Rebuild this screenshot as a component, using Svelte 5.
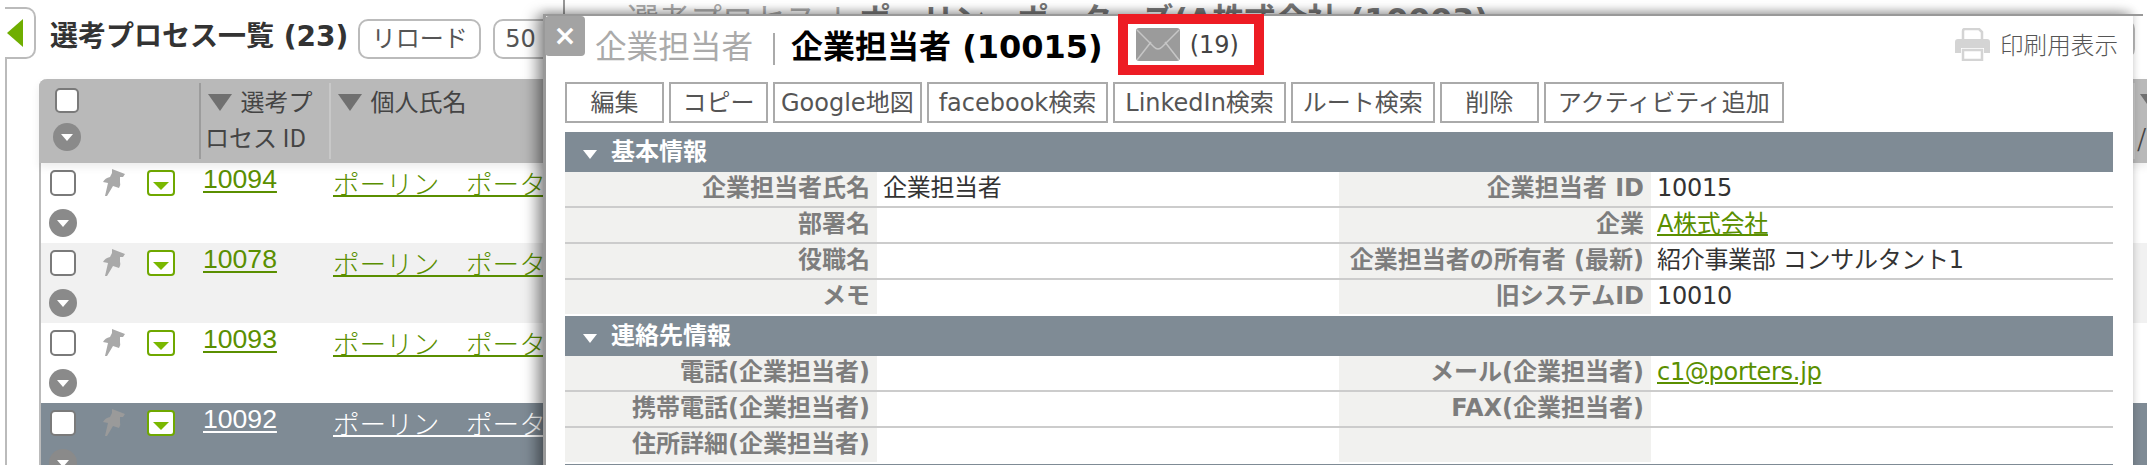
<script>
  const rows = [
    { id: "10094", cls: "" },
    { id: "10078", cls: "alt" },
    { id: "10093", cls: "" },
    { id: "10092", cls: "sel" },
  ];
  const actions = ["編集", "コピー", "Google地図", "facebook検索", "LinkedIn検索", "ルート検索", "削除", "アクティビティ追加"];
  const basic = [
    ["企業担当者氏名", "企業担当者", "企業担当者 ID", "10015"],
    ["部署名", "", "企業", "A株式会社", "#"],
    ["役職名", "", "企業担当者の所有者 (最新)", "紹介事業部 コンサルタント1"],
    ["メモ", "", "旧システムID", "10010"],
  ];
  const contact = [
    ["電話(企業担当者)", "", "メール(企業担当者)", "c1@porters.jp", "#"],
    ["携帯電話(企業担当者)", "", "FAX(企業担当者)", ""],
    ["住所詳細(企業担当者)", "", "", ""],
  ];
</script>

{#snippet pin()}
  <svg class="pin" viewBox="0 0 23 29" aria-hidden="true">
    <path d="M10 1 L23 6 L21 9 L18 9 L18 14 Q19 17 17 20 L11 18 L5 28 L3 28 L6 15 L1 14 Q3 10 8 9 L10 5 Z" />
  </svg>
{/snippet}

{#snippet round()}
  <span class="round"><i></i></span>
{/snippet}

{#snippet table(list)}
  {#each list as r}
    <div class="frow">
      <div class="lab">{r[0]}</div>
      <div class="val">{r[1]}</div>
      <div class="lab">{r[2]}</div>
      <div class="val">
        {#if r[4]}<a href={r[4]}>{r[3]}</a>{:else}{r[3]}{/if}
      </div>
    </div>
  {/each}
{/snippet}

<div class="page">
  <div class="bar">
    <div class="tab"><i></i></div>
    <h1>選考プロセス一覧 (23)</h1>
    <button class="pill reload">リロード</button>
    <button class="pill fifty">50</button>
    <button class="pill far" aria-label="menu"></button>
  </div>

  <div class="content">
    <div class="list">
      <div class="thead">
        <div class="hc first">
          <span class="check"></span>
          {@render round()}
        </div>
        <div class="hc"><i class="sort"></i> 選考プロセス ID</div>
        <div class="hc"><i class="sort"></i> 個人氏名</div>
        <div class="hc clip"><i class="sort"></i> 企業<br />/</div>
      </div>
      {#each rows as r}
        <div class="trow {r.cls}">
          <div class="tools">
            <span class="check"></span>
            {@render pin()}
            <span class="greenbox"><i></i></span>
            {@render round()}
          </div>
          <div class="idc"><a href="#">{r.id}</a></div>
          <div class="namec"><a href="#">ポーリン　ポーターズ</a></div>
        </div>
      {/each}
    </div>
  </div>

  <div class="back">
    <span class="t-gray">選考プロセス</span><span class="t-gray sep">|</span><b>ポーリン　ポーターズ(A株式会社 (10003)</b>
  </div>

  <div class="modal">
    <div class="topline"></div>
    <button class="close" aria-label="閉じる">×</button>
    <div class="mhead">
      <span class="mt-gray">企業担当者</span>
      <span class="mt-sep"></span>
      <strong>企業担当者 (10015)</strong>
      <div class="redbox">
        <svg class="mail" viewBox="0 0 44 33" aria-hidden="true">
          <rect width="44" height="33" rx="3" fill="#9b9b9b" />
          <path d="M1 2 L18 19 Q22 23 26 19 L43 2 M1 32 L15 14 M43 32 L29 14" fill="none" stroke="#c6c6c6" stroke-width="1.5" />
        </svg>
        <span class="count">(19)</span>
      </div>
      <div class="print">
        <svg class="printer" viewBox="0 0 35 33" aria-hidden="true">
          <path d="M8 14 V3 Q8 1 10 1 H24 L27 4 V14 Z" fill="none" stroke="#d4d4d4" stroke-width="2.5" />
          <path d="M3 11 H32 Q35 11 35 14 V25 H29 V20 H6 V25 H0 V14 Q0 11 3 11 Z" fill="#d4d4d4" />
          <path d="M8 22 H27 V32 H8 Z" fill="none" stroke="#d4d4d4" stroke-width="2.5" />
        </svg>
        <span>印刷用表示</span>
      </div>
    </div>

    <div class="actions">
      {#each actions as a}
        <button class="act">{a}</button>
      {/each}
    </div>

    <section>
      <div class="sec"><i></i><span>基本情報</span></div>
      {@render table(basic)}
      <div class="sec"><i></i><span>連絡先情報</span></div>
      {@render table(contact)}
      <div class="sec"></div>
    </section>
  </div>
</div>

<style>
  :global(body) {
    overflow: hidden;
    background: #fff;
  }
  .page {
    position: relative;
    height: 465px;
    overflow: hidden;
    padding-top: 7px;
    box-sizing: border-box;
    font-family: "DejaVu Sans", "Noto Sans CJK JP", sans-serif;
    color: #333;
  }
  .bar {
    display: flex;
    align-items: flex-start;
    height: 52px;
    padding-left: 5px;
    padding-right: 12px;
  }
  .tab {
    width: 29px;
    height: 48px;
    border: 2px solid #bbb;
    border-left: none;
    border-radius: 0 10px 10px 0;
    display: flex;
    align-items: center;
  }
  .tab i {
    margin-left: 2px;
    border-style: solid;
    border-width: 14px 16px 14px 0;
    border-color: transparent #6fae00 transparent transparent;
  }
  h1 {
    margin: 10px 0 0 14px;
    font-size: 28px;
    line-height: 40px;
    font-weight: 700;
    color: #333;
    white-space: nowrap;
  }
  .pill {
    margin-top: 12px;
    height: 40px;
    border: 2px solid #bbb;
    border-radius: 10px;
    background: #fff;
    font: inherit;
    font-size: 24px;
    line-height: 1;
    color: #555;
    padding: 0;
  }
  .reload {
    width: 123px;
    margin-left: 10px;
  }
  .fifty {
    width: 90px;
    margin-left: 12px;
    text-align: left;
    padding-left: 10px;
  }
  .far {
    width: 90px;
    margin-left: auto;
  }
  .content {
    margin-left: 5px;
    height: 406px;
    border-left: 2px solid #bbb;
    padding: 20px 0 0 32px;
    box-sizing: border-box;
  }
  .list {
    border-left: 2px solid #bbb;
    border-top-left-radius: 8px;
  }
  .thead {
    display: grid;
    grid-template-columns: 158px 130px 1804px 1fr;
    height: 84px;
    background: #b9b9b9;
    border-top-left-radius: 8px;
    box-shadow: 0 4px 8px rgba(0, 0, 0, 0.08);
    position: relative;
    font-size: 24px;
    line-height: 36px;
    font-family: "Noto Sans CJK JP", sans-serif;
    margin-left: -2px;
    padding-left: 2px;
  }
  .hc {
    margin: 4px 0;
    padding: 0 4px;
    border-left: 2px solid #9c9c9c;
    color: #444;
    box-sizing: border-box;
    overflow: hidden;
  }
  .hc + .hc + .hc {
    border-left-color: #c8c8c8;
  }
  .hc.first {
    border: none;
    padding: 5px 0 0 14px;
    display: flex;
    flex-direction: column;
    align-items: flex-start;
    gap: 10px;
  }
  .hc.clip {
    white-space: nowrap;
    padding-left: 2px;
  }
  .hc.first .round {
    margin-left: -2px;
  }
  .sort {
    display: inline-block;
    margin-left: 3px;
    margin-right: 3px;
    border-style: solid;
    border-width: 17px 12px 0;
    border-color: #707070 transparent transparent;
  }
  .check {
    display: block;
    width: 24px;
    height: 25px;
    border: 2px solid #7a7a7a;
    border-radius: 5px;
    background: #fff;
    box-sizing: border-box;
  }
  .round {
    display: flex;
    align-items: center;
    justify-content: center;
    width: 28px;
    height: 28px;
    border-radius: 50%;
    background: #8a8a8a;
  }
  .round i {
    border-style: solid;
    border-width: 7px 6px 0;
    border-color: #fff transparent transparent;
  }
  .trow {
    display: grid;
    grid-template-columns: 160px 130px 1fr;
    height: 80px;
    background: #fff;
  }
  .trow.alt {
    background: #f1f1f1;
  }
  .trow.sel {
    background: #7f8b95;
  }
  .tools {
    display: grid;
    grid-template-columns: 52px 45px 28px;
    grid-template-rows: 26px 28px;
    row-gap: 13px;
    padding: 7px 0 0 9px;
    align-content: start;
  }
  .tools .check {
    width: 26px;
    height: 26px;
  }
  .tools .round {
    grid-column: 1;
    grid-row: 2;
    margin-left: -1px;
  }
  .pin {
    width: 23px;
    height: 29px;
    fill: #a9a9a9;
    filter: blur(0.6px);
    margin-top: -2px;
  }
  .sel .pin {
    fill: #9a9a9a;
  }
  .greenbox {
    display: flex;
    align-items: center;
    justify-content: center;
    width: 28px;
    height: 26px;
    border: 2px solid #6fa800;
    border-radius: 4px;
    background: #fff;
    box-sizing: border-box;
  }
  .greenbox i {
    margin-top: 5px;
    border-style: solid;
    border-width: 8px 8px 0;
    border-color: #7ab800 transparent transparent;
  }
  a {
    color: #5a8f00;
    text-decoration: underline;
    text-decoration-thickness: 2px;
  }
  .idc,
  .namec {
    font-size: 26.6px;
    line-height: 30px;
    white-space: nowrap;
    overflow: hidden;
  }
  .idc {
    padding: 1px 0 0 2px;
    font-family: "Liberation Sans", sans-serif;
  }
  .idc a {
    text-underline-offset: 3px;
  }
  .namec {
    padding: 5px 0 8px 2px;
    font-family: "Noto Sans CJK JP", sans-serif;
    font-weight: 300;
  }
  .namec a {
    text-underline-offset: 1px;
  }
  .sel a {
    color: #fff;
  }
  .back {
    position: absolute;
    left: 563px;
    top: 0;
    width: 1580px;
    height: 14px;
    padding-left: 62px;
    box-sizing: border-box;
    border-left: 2px solid #999;
    background: #fff;
    overflow: hidden;
    font-size: 31.6px;
    line-height: 40px;
    white-space: nowrap;
    color: #777;
  }
  .t-gray {
    color: #aaa;
  }
  .sep {
    margin: 0 16px;
  }
  .modal {
    position: absolute;
    left: 543px;
    top: 14px;
    width: 1590px;
    height: 480px;
    box-sizing: border-box;
    border-top: 2px solid #999;
    border-left: 3px solid #999;
    background: #fff;
    box-shadow: -8px 0 12px rgba(0, 0, 0, 0.35), 0 -3px 8px rgba(0, 0, 0, 0.18);
  }
  .topline {
    position: absolute;
    top: -2px;
    left: 100%;
    width: 10px;
    height: 2px;
    background: #999;
  }
  .close {
    position: absolute;
    left: -1px;
    top: 0;
    width: 40px;
    height: 40px;
    padding: 0;
    border: none;
    border-radius: 4px;
    background: #a3a3a3;
    color: #fff;
    font: inherit;
    font-size: 28px;
    font-weight: 700;
    line-height: 38px;
  }
  .mhead {
    display: flex;
    align-items: flex-start;
    height: 66px;
    padding: 0 15px 0 49px;
  }
  .mt-gray {
    margin-top: 9px;
    font-size: 31.6px;
    line-height: 44px;
    color: #aaa;
  }
  .mt-sep {
    width: 2px;
    height: 32px;
    margin: 17px 16px 0 20px;
    background: #aaa;
  }
  strong {
    margin-top: 9px;
    font-size: 32px;
    line-height: 44px;
    color: #000;
    white-space: nowrap;
  }
  .redbox {
    display: flex;
    align-items: center;
    gap: 10px;
    box-sizing: border-box;
    width: 146px;
    height: 61px;
    margin: -2px 0 0 15px;
    padding-left: 8px;
    border: 10px solid #ed1c24;
    background: #fff;
    position: relative;
  }
  .mail {
    width: 44px;
    height: 33px;
    flex: none;
  }
  .count {
    font-size: 24px;
    color: #444;
    white-space: nowrap;
  }
  .print {
    margin: 11px 0 0 auto;
    display: flex;
    align-items: center;
    gap: 10px;
    font-size: 23.6px;
    color: #555;
    font-family: "Noto Sans CJK JP", sans-serif;
    font-weight: 300;
  }
  .printer {
    width: 35px;
    height: 33px;
  }
  .actions {
    display: flex;
    gap: 5px;
    margin: 0 0 9px 19px;
  }
  .act {
    height: 41px;
    min-width: 99px;
    padding: 0 10px;
    border: 2px solid #aaa;
    border-radius: 0;
    background: #fff;
    font: inherit;
    font-size: 24px;
    line-height: 1;
    color: #555;
    white-space: nowrap;
  }
  .act:nth-child(3) {
    padding: 0 6px;
  }
  .act:nth-child(8) {
    padding: 0 12px;
  }
  section {
    margin-left: 19px;
    width: 1548px;
  }
  .sec {
    display: flex;
    align-items: center;
    height: 40px;
    padding-left: 18px;
    background: #7f8b95;
    color: #fff;
    font-size: 24px;
    font-weight: 700;
  }
  .sec span {
    margin-top: -6px;
  }
  .sec i {
    margin-right: 14px;
    margin-top: 4px;
    border-style: solid;
    border-width: 9px 7px 0;
    border-color: #fff transparent transparent;
  }
  .frow {
    display: grid;
    grid-template-columns: 312px 462px 312px 462px;
    height: 36px;
    border-bottom: 2px solid #ccc;
    box-sizing: border-box;
    font-size: 24px;
    line-height: 32px;
    white-space: nowrap;
  }
  .frow:has(+ .sec) {
    border-bottom-color: #fff;
  }
  .lab {
    background: #f1f1ef;
    text-align: right;
    padding-right: 7px;
    font-weight: 700;
    color: #7d7d7d;
  }
  .val {
    padding-left: 6px;
    color: #333;
    letter-spacing: -0.3px;
  }
  .val a {
    text-underline-offset: 2px;
  }
</style>
